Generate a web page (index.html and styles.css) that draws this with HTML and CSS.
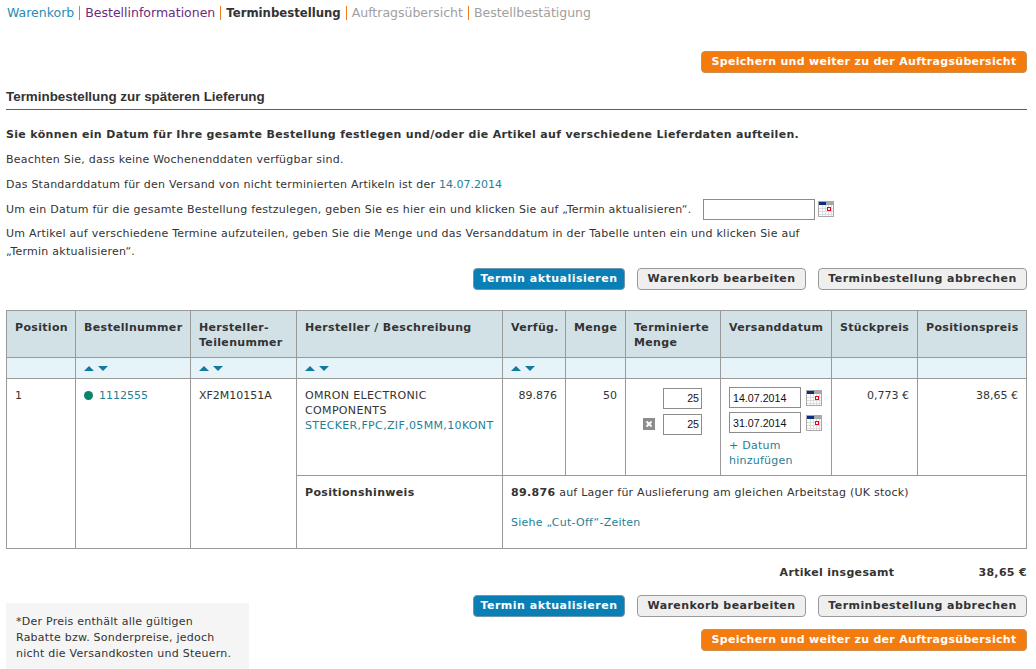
FILE: index.html
```html
<!DOCTYPE html>
<html lang="de">
<head>
<meta charset="utf-8">
<title>Terminbestellung</title>
<link rel="stylesheet" href="styles.css">
</head>
<body>
<svg class="sprites" width="0" height="0" aria-hidden="true">
  <symbol id="cal" viewBox="0 0 16 16">
    <rect x="0" y="0" width="16" height="16" fill="#a8a8a8"/>
    <rect x="1" y="1" width="7" height="3" fill="#0a2f80"/>
    <rect x="1" y="4" width="14" height="11" fill="#fff"/>
    <path d="M1 7.5h14M1 10.5h14M1 13.5h14M4.5 4v11M7.5 4v11M10.5 4v11M13.5 4v11" stroke="#dcdcdc" fill="none"/>
    <rect x="9.5" y="6.5" width="3" height="3" fill="#fff" stroke="#e8001c"/>
  </symbol>
</svg>
<nav class="steps">
  <a class="step step-done">Warenkorb</a><span class="sep"></span><a class="step step-visited">Bestellinformationen</a><span class="sep"></span><b class="step step-current">Terminbestellung</b><span class="sep"></span><span class="step step-next">Auftragsübersicht</span><span class="sep"></span><span class="step step-next">Bestellbestätigung</span>
</nav>
<div class="actions actions-top"><button class="btn btn-orange">Speichern und weiter zu der Auftragsübersicht</button></div>
<h2 class="title">Terminbestellung zur späteren Lieferung</h2>
<p class="lead">Sie können ein Datum für Ihre gesamte Bestellung festlegen und/oder die Artikel auf verschiedene Lieferdaten aufteilen.</p>
<p class="line">Beachten Sie, dass keine Wochenenddaten verfügbar sind.</p>
<p class="line">Das Standarddatum für den Versand von nicht terminierten Artikeln ist der <span class="date">14.07.2014</span></p>
<div class="line line-date">
  <span>Um ein Datum für die gesamte Bestellung festzulegen, geben Sie es hier ein und klicken Sie auf „Termin aktualisieren“.</span>
  <input class="date-all" type="text">
  <svg class="cal"><use href="#cal"/></svg>
</div>
<p class="line line-wrap">Um Artikel auf verschiedene Termine aufzuteilen, geben Sie die Menge und das Versanddatum in der Tabelle unten ein und klicken Sie auf „Termin aktualisieren“.</p>
<div class="actions actions-mid">
  <button class="btn btn-blue">Termin aktualisieren</button>
  <button class="btn btn-gray">Warenkorb bearbeiten</button>
  <button class="btn btn-gray">Terminbestellung abbrechen</button>
</div>
<table class="grid">
  <colgroup>
    <col class="c1"><col class="c2"><col class="c3"><col class="c4"><col class="c5"><col class="c6"><col class="c7"><col class="c8"><col class="c9"><col class="c10">
  </colgroup>
  <thead>
    <tr class="head">
      <th>Position</th><th>Bestellnummer</th><th>Hersteller-<br>Teilenummer</th><th>Hersteller / Beschreibung</th><th>Verfüg.</th><th>Menge</th><th>Terminierte Menge</th><th>Versanddatum</th><th>Stückpreis</th><th>Positionspreis</th>
    </tr>
    <tr class="sort">
      <td></td>
      <td><span class="up"></span><span class="down"></span></td>
      <td><span class="up"></span><span class="down"></span></td>
      <td><span class="up"></span><span class="down"></span></td>
      <td><span class="up"></span><span class="down"></span></td>
      <td></td><td></td><td></td><td></td><td></td>
    </tr>
  </thead>
  <tbody>
    <tr class="item">
      <td rowspan="2" class="plain">1</td>
      <td rowspan="2" class="plain"><span class="dot"></span><a class="link">1112555</a></td>
      <td rowspan="2" class="plain">XF2M10151A</td>
      <td class="caps">OMRON ELECTRONIC COMPONENTS<br><a class="link">STECKER,FPC,ZIF,05MM,10KONT</a></td>
      <td class="num">89.876</td>
      <td class="num">50</td>
      <td class="qty">
        <div class="qty-row"><input class="qty-in" type="text" value="25"></div>
        <div class="qty-row"><span class="del"><svg viewBox="0 0 12 12" width="12" height="12"><rect width="12" height="12" fill="#8c8c8c"/><path d="M3.5 3.5l5 5M8.5 3.5l-5 5" stroke="#fff" stroke-width="2"/></svg></span><input class="qty-in" type="text" value="25"></div>
      </td>
      <td class="ship">
        <div class="ship-row"><input class="ship-in" type="text" value="14.07.2014"><svg class="cal"><use href="#cal"/></svg></div>
        <div class="ship-row"><input class="ship-in" type="text" value="31.07.2014"><svg class="cal"><use href="#cal"/></svg></div>
        <a class="link add">+ Datum hinzufügen</a>
      </td>
      <td class="num">0,773 €</td>
      <td class="num">38,65 €</td>
    </tr>
    <tr class="note">
      <td><b>Positionshinweis</b></td>
      <td colspan="6"><b>89.876</b> auf Lager für Auslieferung am gleichen Arbeitstag (UK stock)<a class="link cutoff">Siehe „Cut-Off“-Zeiten</a></td>
    </tr>
  </tbody>
</table>
<div class="total"><b class="total-label">Artikel insgesamt</b><b class="total-value">38,65 €</b></div>
<div class="bottom">
  <aside class="hint">*Der Preis enthält alle gültigen Rabatte bzw. Sonderpreise, jedoch nicht die Versandkosten und Steuern.</aside>
  <div class="bottom-actions">
    <div class="actions">
      <button class="btn btn-blue">Termin aktualisieren</button>
      <button class="btn btn-gray">Warenkorb bearbeiten</button>
      <button class="btn btn-gray">Terminbestellung abbrechen</button>
    </div>
    <div class="actions"><button class="btn btn-orange">Speichern und weiter zu der Auftragsübersicht</button></div>
  </div>
</div>
</body>
</html>
```
FILE: styles.css
```css
* { box-sizing: border-box; }
html, body { height: 669px; overflow: hidden; }
body {
  margin: 0;
  padding: 0 9px 0 6px;
  background: #fff;
  color: #333;
  font: 11px/15px "DejaVu Sans", Verdana, sans-serif;
  letter-spacing: .24px;
}
b, th { letter-spacing: .33px; }
.sprites { position: absolute; }
.steps { display: flex; align-items: center; height: 14px; margin-top: 6px; font-size: 12.5px; line-height: 14px; white-space: nowrap; letter-spacing: 0; }
.sep { width: 1px; height: 14px; background: #f07a1a; margin: 0 5px; }
.step-done { color: #2b8bb0; margin-left: 1px; }
.step-visited { color: #6b2b80; }
.step-current { color: #333; font-size: 11.7px; letter-spacing: 0; }
.step-next { color: #a0a0a0; }
.actions { display: flex; justify-content: flex-end; gap: 12px; }
.actions-top { margin-top: 31px; }
.btn {
  height: 22px;
  padding: 0;
  border-radius: 4px;
  font: bold 11px/18px "DejaVu Sans", Verdana, sans-serif;
  letter-spacing: .3px;
  white-space: nowrap;
}
.btn-orange { width: 326px; background: #f47c0f; border: 1px solid #c9904f; color: #fff; }
.btn-blue { width: 152px; background: #0a7fb6; border: 1px solid #6f96ad; color: #fff; letter-spacing: .5px; }
.btn-gray { background: #efefef; border: 1px solid #9a9a9a; color: #333; letter-spacing: .43px; }
.btn-gray:nth-child(2) { width: 169px; }
.btn-gray:nth-child(3) { width: 209px; }
.title {
  margin: 15px 0 0;
  height: 22px;
  border-bottom: 1px solid #1f7390;
  font: bold 13.4px/17px "Liberation Sans", Arial, sans-serif;
  letter-spacing: 0;
  color: #333;
}
.lead { margin: 17px 0 0; font-weight: bold; line-height: 15px; letter-spacing: .33px; }
.line { margin: 10px 0 0; }
.line-date { display: flex; align-items: center; height: 22px; margin-top: 6px; }
.date { color: #1f7f96; letter-spacing: 0; }
.date-all { width: 112px; height: 21px; margin: 0 3px 0 12px; border: 1px solid #8c8c8c; background: #fff; padding: 0; }
.cal { width: 16px; height: 16px; flex: none; }
.line-wrap { width: 820px; margin-top: 5px; line-height: 18px; }
.actions-mid { margin-top: 7px; }
.grid { border-collapse: collapse; table-layout: fixed; width: 1020px; margin-top: 20px; }
.c1 { width: 69px; } .c2 { width: 115px; } .c3 { width: 106px; } .c4 { width: 206px; } .c5 { width: 63px; }
.c6 { width: 60px; } .c7 { width: 95px; } .c8 { width: 111px; } .c9 { width: 86px; } .c10 { width: 109px; }
.grid th, .grid td { border: 1px solid #9a9a9a; padding: 8px; text-align: left; vertical-align: top; }
.head th { height: 47px; background: #d2e1e6; font-weight: bold; padding: 9px 8px 0; }
.sort td { height: 21px; background: #e6f4f9; padding: 0 8px; vertical-align: middle; line-height: 0; }
.up, .down { display: inline-block; width: 0; height: 0; border-left: 5px solid transparent; border-right: 5px solid transparent; margin-right: 4px; }
.up { border-bottom: 5px solid #117a9e; }
.down { border-top: 5px solid #117a9e; }
.item td { height: 97px; padding-top: 9px; }
.note td { height: 73px; padding-top: 9px; }
.link { color: #1f7f96; }
.plain, .num { letter-spacing: 0; }
.caps { letter-spacing: .35px; }
.num { text-align: right !important; }
.dot { display: inline-block; width: 9px; height: 9px; margin-right: 6px; border-radius: 50%; background: #0a8468; vertical-align: -1px; }
.grid .qty { padding: 6px 18px 0 0; }
.qty-row { display: flex; justify-content: flex-end; align-items: center; gap: 8px; height: 26px; }
.qty-in { width: 39px; height: 21px; padding: 0 2px; border: 1px solid #8c8c8c; text-align: right; font: 10.67px "Liberation Sans", Arial, sans-serif; color: #111; }
.del { display: flex; }
.grid .ship { padding: 6px 4px 0 8px; }
.ship-row { display: flex; align-items: center; gap: 5px; height: 25px; }
.ship-in { width: 72px; height: 21px; padding: 0 3px; border: 1px solid #8c8c8c; font: 10.67px "Liberation Sans", Arial, sans-serif; color: #111; }
.add { display: block; margin-top: 3px; width: 80px; }
.cutoff { display: block; margin-top: 15px; }
.total { display: flex; justify-content: flex-end; margin-top: 16px; }
.total-label { margin-right: 84px; }
.bottom { display: flex; justify-content: space-between; align-items: flex-start; margin-top: 15px; }
.hint { width: 243px; height: 66px; margin-top: 8px; padding: 11px 15px 0 10px; background: #f5f5f5; line-height: 16px; }
.bottom-actions { display: flex; flex-direction: column; gap: 12px; }
```
